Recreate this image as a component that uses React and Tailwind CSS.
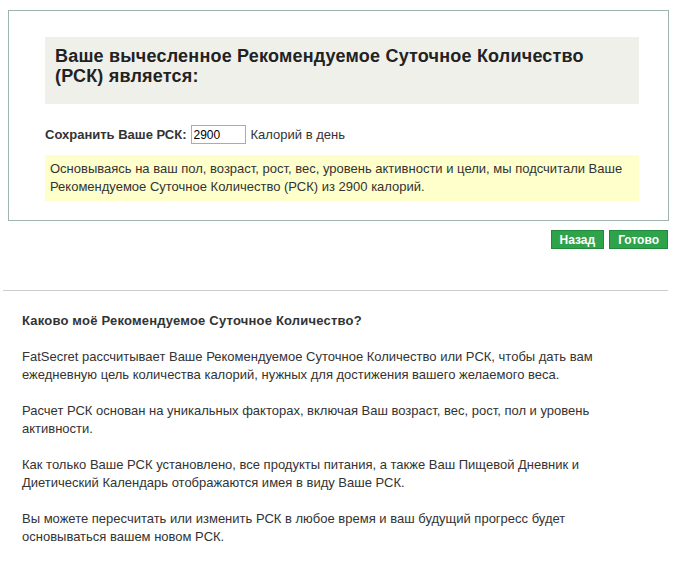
export default function App() {
    return (
        <div className="w-[676px] h-[573px] bg-white overflow-hidden font-['Liberation_Sans',Arial,sans-serif] text-[#333]">
            {/* Result panel */}
            <div className="ml-[8px] mt-[10px] w-[661px] h-[211px] border border-[#9db5ad] pt-[26px] pl-[36px]">
                <div className="w-[594px] h-[67px] bg-[#f0f0eb] pl-[10px] pt-[9px]">
                    <h1 className="w-[560px] text-[18px] leading-[20px] font-bold text-[#222] tracking-[0.2px]">
                        Ваше вычесленное Рекомендуемое Суточное Количество (РСК) является:
                    </h1>
                </div>
                <div className="flex items-center mt-[21px] h-[19px] text-[13px]">
                    <span className="font-bold mr-[4px]">Сохранить Ваше РСК:</span>
                    <input
                        defaultValue="2900"
                        className="w-[55px] h-[19px] border border-[#a5acb2] px-[2px] text-[12px] text-black outline-none mr-[5px]"
                    />
                    <span>Калорий в день</span>
                </div>
                <div className="w-[594px] h-[46px] mt-[11px] bg-[#ffffcc] px-[5px] pt-[5px] text-[13px] leading-[18px]">
                    Основываясь на ваш пол, возраст, рост, вес, уровень активности и цели, мы подсчитали Ваше Рекомендуемое Суточное Количество (РСК) из 2900 калорий.
                </div>
            </div>

            {/* Buttons */}
            <div className="flex justify-end gap-[5px] w-[668px] mt-[9px]">
                <button className="h-[19px] px-[8px] bg-[#2ea34c] border border-[#1f8a3a] text-white text-[12px] font-bold leading-none">
                    Назад
                </button>
                <button className="h-[19px] px-[8px] bg-[#2ea34c] border border-[#1f8a3a] text-white text-[12px] font-bold leading-none">
                    Готово
                </button>
            </div>

            <div className="ml-[3px] w-[665px] mt-[41px] border-t border-[#cccccc]" />

            {/* Info */}
            <div className="pl-[22px] pr-[20px] pt-[21px] text-[13px] leading-[18px]">
                <h2 className="font-bold text-[13px] text-[#333] mb-[18px] tracking-[0.2px]">
                    Каково моё Рекомендуемое Суточное Количество?
                </h2>
                <p className="mb-[18px] w-[620px]">
                    FatSecret рассчитывает Ваше Рекомендуемое Суточное Количество или РСК, чтобы дать вам ежедневную цель количества калорий, нужных для достижения вашего желаемого веса.
                </p>
                <p className="mb-[18px] w-[600px]">
                    Расчет РСК основан на уникальных факторах, включая Ваш возраст, вес, рост, пол и уровень активности.
                </p>
                <p className="mb-[18px] w-[600px]">
                    Как только Ваше РСК установлено, все продукты питания, а также Ваш Пищевой Дневник и Диетический Календарь отображаются имея в виду Ваше РСК.
                </p>
                <p className="w-[600px]">
                    Вы можете пересчитать или изменить РСК в любое время и ваш будущий прогресс будет основываться вашем новом РСК.
                </p>
            </div>
        </div>
    )
}
